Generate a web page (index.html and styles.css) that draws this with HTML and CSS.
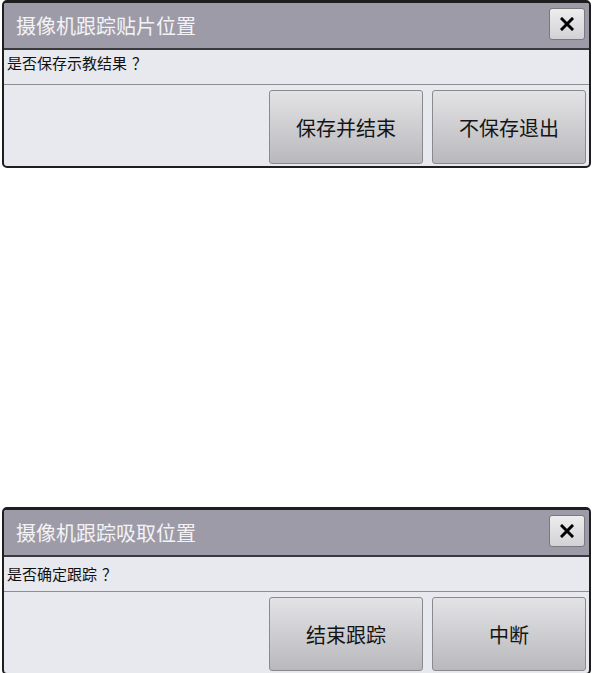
FILE: index.html
```html
<!DOCTYPE html>
<html lang="zh-CN">
<head>
    <meta charset="UTF-8">
    <meta name="viewport" content="width=device-width, initial-scale=1.0">
    <title>摄像机跟踪</title>
    <link rel="stylesheet" href="styles.css">
</head>
<body>
    <div class="dialog">
        <div class="title-bar">
            <span class="title">摄像机跟踪贴片位置</span>
            <button class="close-btn" aria-label="关闭">
                <svg width="14" height="14" viewBox="0 0 14 14">
                    <path d="M2 2 L12 12 M12 2 L2 12" stroke="#000" stroke-width="3" stroke-linecap="square"/>
                </svg>
            </button>
        </div>
        <div class="message message-raised">是否保存示教结果<span class="qmark">？</span></div>
        <div class="actions">
            <button class="action-btn">保存并结束</button>
            <button class="action-btn">不保存退出</button>
        </div>
    </div>

    <div class="dialog dialog-second">
        <div class="title-bar">
            <span class="title">摄像机跟踪吸取位置</span>
            <button class="close-btn" aria-label="关闭">
                <svg width="14" height="14" viewBox="0 0 14 14">
                    <path d="M2 2 L12 12 M12 2 L2 12" stroke="#000" stroke-width="3" stroke-linecap="square"/>
                </svg>
            </button>
        </div>
        <div class="message">是否确定跟踪<span class="qmark">？</span></div>
        <div class="actions">
            <button class="action-btn">结束跟踪</button>
            <button class="action-btn">中断</button>
        </div>
    </div>
</body>
</html>
```

FILE: styles.css
```css
body {
    margin: 0;
    background-color: #fff;
    font-family: "Noto Sans CJK SC", "Noto Sans", sans-serif;
    overflow: hidden;
}

.dialog {
    box-sizing: border-box;
    width: 589px;
    margin-left: 2px;
    border: 2px solid #1e1e1e;
    border-top-width: 3px;
    border-radius: 5px;
    background-color: #e8e9ee;
    overflow: hidden;
}

.dialog-second {
    margin-top: 339px;
}

.title-bar {
    display: flex;
    justify-content: space-between;
    align-items: flex-start;
    height: 45px;
    background-color: #9e9ba9;
    border-bottom: 2px solid #3a3a3e;
}

.title {
    padding-left: 12px;
    line-height: 45px;
    font-size: 20px;
    color: #f3f3f5;
}

.close-btn {
    display: flex;
    align-items: center;
    justify-content: center;
    width: 36px;
    height: 32px;
    margin: 5px 4px 0 0;
    padding: 0;
    border: 1px solid #7a7a7e;
    border-radius: 3px;
    background: linear-gradient(#ededee, #d2d2d6);
}

.message {
    box-sizing: border-box;
    height: 35px;
    padding-left: 3px;
    line-height: 34px;
    font-size: 15px;
    color: #111;
    border-bottom: 1px solid #8e8e92;
}

.message-raised {
    line-height: 26px;
}

.qmark {
    margin-left: 5px;
}

.actions {
    display: flex;
    justify-content: flex-end;
    gap: 9px;
    height: 81px;
    padding: 5px 3px 2px 0;
    box-sizing: border-box;
}

.action-btn {
    width: 154px;
    height: 74px;
    border: 1px solid #8a8a8e;
    border-radius: 3px;
    background: linear-gradient(#e3e3e6, #b9b9bd);
    font-family: "Noto Sans CJK SC", "Noto Sans", sans-serif;
    font-size: 20px;
    color: #151515;
}
```
